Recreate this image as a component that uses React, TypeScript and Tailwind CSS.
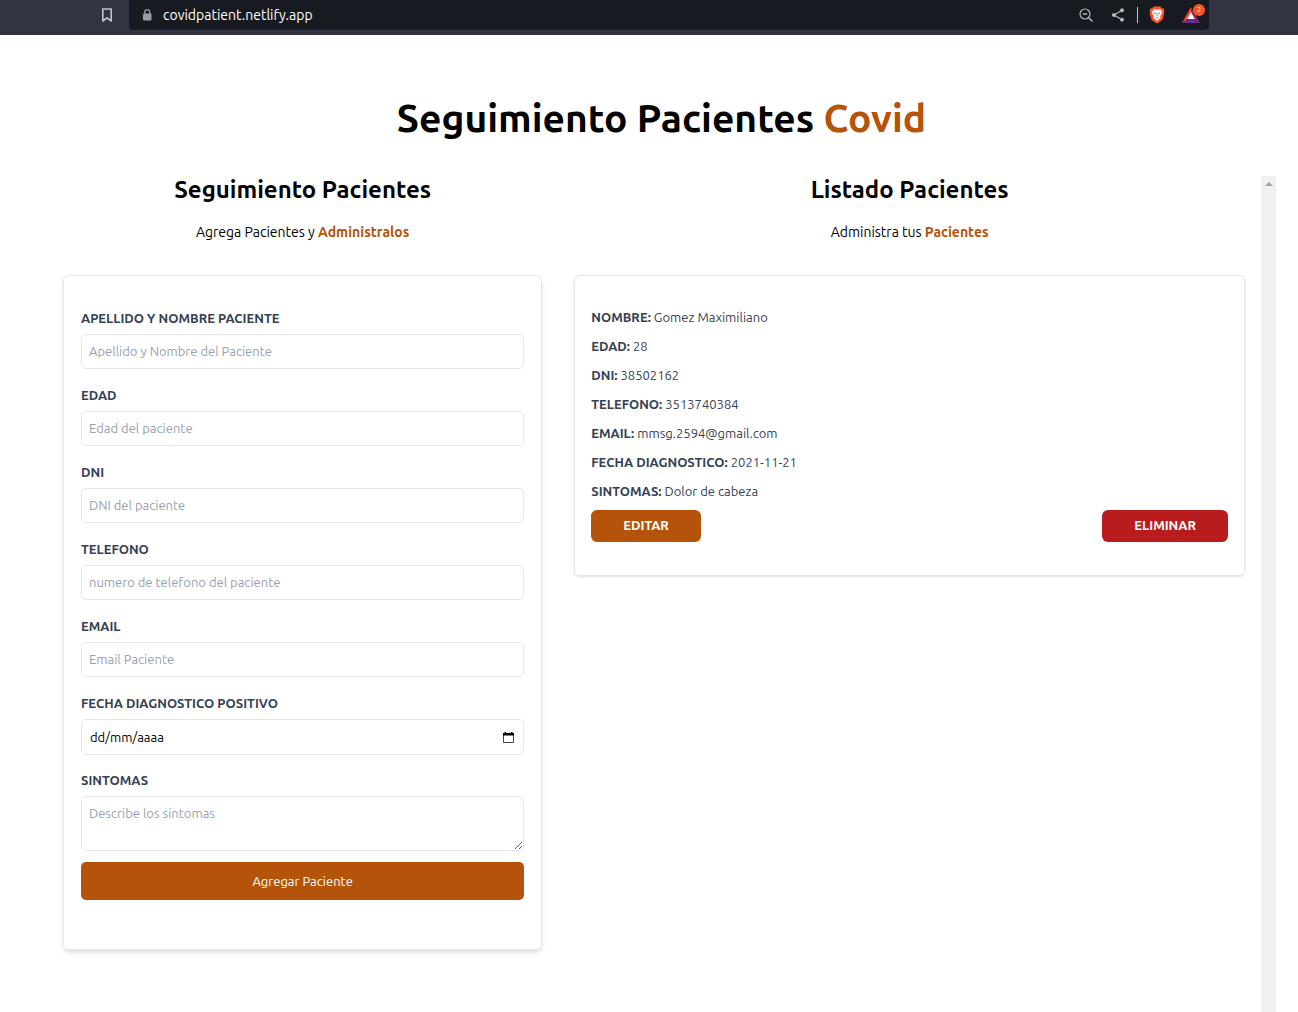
import { MdShare } from 'react-icons/md';

const label = 'text-[13px] leading-5 font-bold text-gray-700 uppercase';
const field =
  'mt-1.5 block w-full rounded-[5px] border border-gray-200 px-[7px] text-[13px] leading-5 placeholder:text-gray-400';

const fields = [
  { id: 'nombre', label: 'Apellido y nombre paciente', placeholder: 'Apellido y Nombre del Paciente', type: 'text' },
  { id: 'edad', label: 'Edad', placeholder: 'Edad del paciente', type: 'number' },
  { id: 'dni', label: 'DNI', placeholder: 'DNI del paciente', type: 'number' },
  { id: 'telefono', label: 'Telefono', placeholder: 'numero de telefono del paciente', type: 'tel' },
  { id: 'email', label: 'Email', placeholder: 'Email Paciente', type: 'email' },
];

const patient = [
  ['Nombre', 'Gomez Maximiliano'],
  ['Edad', '28'],
  ['DNI', '38502162'],
  ['Telefono', '3513740384'],
  ['Email', 'mmsg.2594@gmail.com'],
  ['Fecha Diagnostico', '2021-11-21'],
  ['Sintomas', 'Dolor de cabeza'],
];

function BookmarkIcon() {
  return (
    <svg viewBox="0 0 16 16" className="size-4" aria-hidden="true">
      <path
        d="M3.800 2h8.400v12L8 10.800 3.800 14z"
        fill="none"
        stroke="currentColor"
        strokeWidth="1.600"
        strokeLinejoin="round"
      />
    </svg>
  );
}

function LockIcon() {
  return (
    <svg viewBox="0 0 12 14" className="h-3.5 w-3" aria-hidden="true">
      <rect x="2" y="5.500" width="8.500" height="7" rx="0.8" fill="currentColor" />
      <path d="M3.800 6V4a2.450 2.450 0 0 1 4.900 0v2" fill="none" stroke="currentColor" strokeWidth="1.300" />
    </svg>
  );
}

function ZoomOutIcon() {
  return (
    <svg viewBox="0 0 16 16" className="size-4" fill="none" stroke="currentColor" strokeWidth="1.200" aria-hidden="true">
      <circle cx="7" cy="7" r="5" />
      <path d="M4.800 7h4.400" strokeWidth="1.400" />
      <path d="M10.700 10.700L14.500 14.500" strokeWidth="1.500" />
    </svg>
  );
}

function BraveIcon() {
  return (
    <svg viewBox="0 0 18 20" className="h-[18px] w-4" aria-hidden="true">
      <path d="M5.500 0.500h7l2 2 1.500-.2L17.400 4.500 16.800 6.500 17.200 8 15 15.500 9 19.700 3 15.500.8 8l.4-1.500L.6 4.500 2 2.300l1.500.2z" fill="#fb542b" />
      <path d="M9 4l3.300-.5L14.800 6l-.4 2.200-1.900 3.200.6 1.700L9 16.700l-4.100-3.600.6-1.700-1.900-3.200L3.200 6l2.500-2.500z" fill="#fff" />
      <path d="M4.800 7l3 .8-.7 1.600zM13.200 7l-3 .8.7 1.600zM8.500 8h1v3.500h-1zM7 11.500l2 1.300 2-1.300-2 2.700z" fill="#fb542b" />
    </svg>
  );
}

function RewardsIcon() {
  return (
    <svg viewBox="0 0 18 16" className="h-4 w-[18px]" aria-hidden="true">
      <path d="M9 0L0 16l5.500-4L9 5.500z" fill="#ff4724" />
      <path d="M9 0l9 16-5.500-4L9 5.500z" fill="#9e1f63" />
      <path d="M0 16h18l-5.500-4h-7z" fill="#662d91" />
      <path d="M9 5L5.200 12h7.600z" fill="#fff" />
    </svg>
  );
}

function CalendarIcon() {
  return (
    <svg viewBox="0 0 13 13" className="size-[13px]" aria-hidden="true">
      <path d="M1.500 4v7.500h10V4" fill="none" stroke="#444" />
      <path d="M1 2h1.500V1H4v1h5V1h1.500v1H12v2.500H1z" fill="#000" />
    </svg>
  );
}

function BrowserBar() {
  return (
    <header className="flex h-[35px] items-start bg-[#323443] pr-[89px] pl-[99px] text-[#c3c4c7]">
      <button type="button" aria-label="Guardar marcador" className="mt-[7px]">
        <BookmarkIcon />
      </button>
      <div className="ml-3.5 flex h-[30px] flex-1 items-center rounded-b bg-[#171a21] pr-1 pl-3 text-[#b5b6b9]">
        <span className="text-[#9a9ba3]"><LockIcon /></span>
        <input
          aria-label="Dirección"
          defaultValue="covidpatient.netlify.app"
          className="ml-2.5 min-w-0 flex-1 bg-transparent text-sm text-white outline-none"
        />
        <button type="button" aria-label="Zoom"><ZoomOutIcon /></button>
        <button type="button" aria-label="Compartir" className="ml-4"><MdShare size={16} /></button>
        <span className="ml-[11px] h-4 w-px bg-[#c3c4c7]" />
        <button type="button" aria-label="Brave Shields" className="ml-[11px]"><BraveIcon /></button>
        <button type="button" aria-label="Brave Rewards" className="relative ml-[17px] pr-[5px]">
          <RewardsIcon />
          <span className="absolute -top-[3px] right-0 flex size-3 items-center justify-center rounded-full bg-[#fb542b] text-[8px] leading-none text-white">
            2
          </span>
        </button>
      </div>
    </header>
  );
}

function PatientForm() {
  return (
    <section className="w-[41.6%] px-4">
      <h2 className="text-center text-2xl leading-7 font-bold">Seguimiento Pacientes</h2>
      <p className="mt-[18px] text-center text-sm">
        Agrega Pacientes y <span className="font-bold text-[#b45309]">Administralos</span>
      </p>
      <form className="mt-[33px] rounded-md border border-gray-200 px-[17px] pt-8 pb-[49px] shadow-md">
        {fields.map((f) => (
          <div key={f.id} className="mb-4">
            <label htmlFor={f.id} className={`block ${label}`}>{f.label}</label>
            <input id={f.id} type={f.type} placeholder={f.placeholder} className={`h-[35px] pb-0.5 ${field}`} />
          </div>
        ))}
        <div className="mb-[15px]">
          <label htmlFor="fecha" className={`block ${label}`}>Fecha diagnostico positivo</label>
          <div className="mt-1.5 flex h-9 items-center rounded-[5px] border border-gray-200 px-2">
            <input
              id="fecha"
              type="text"
              placeholder="dd/mm/aaaa"
              className="min-w-0 flex-1 text-[13px] leading-5 outline-none placeholder:text-black"
            />
            <button type="button" aria-label="Abrir calendario"><CalendarIcon /></button>
          </div>
        </div>
        <label htmlFor="sintomas" className={`block ${label}`}>Sintomas</label>
        <textarea id="sintomas" placeholder="Describe los sintomas" className={`h-[55px] py-1.5 ${field}`} />
        <button type="submit" className="mt-[11px] block h-[38px] w-full rounded-[5px] bg-[#b45309] pt-0.5 text-[13px] text-white">
          Agregar Paciente
        </button>
      </form>
    </section>
  );
}

function PatientList() {
  return (
    <section className="flex-1 px-4">
      <h2 className="text-center text-2xl leading-7 font-bold">Listado Pacientes</h2>
      <p className="mt-[18px] text-center text-sm">
        Administra tus <span className="font-bold text-[#b45309]">Pacientes</span>
      </p>
      <article className="mt-[33px] rounded-md border border-gray-200 px-4 pt-[31px] pb-[33px] shadow">
        {patient.map(([name, value]) => (
          <p key={name} className="mb-[9px] text-[13px] leading-5 text-gray-700">
            <span className="font-bold uppercase">{name}:</span> {value}
          </p>
        ))}
        <div className="flex justify-between text-[13px] font-bold text-white">
          <button type="button" className="h-8 rounded-md bg-[#b45309] px-8 uppercase">Editar</button>
          <button type="button" className="h-8 rounded-md bg-[#b91c1c] px-8 uppercase">Eliminar</button>
        </div>
      </article>
    </section>
  );
}

export default function App() {
  return (
    <div className="flex min-h-screen flex-col bg-white font-['Ubuntu','Noto_Sans',sans-serif] text-black">
      <BrowserBar />
      <main className="flex flex-1 flex-col pr-[22px] pl-[47px]">
        <h1 className="mt-[59px] text-center text-[39px] leading-[48px] font-bold">
          Seguimiento Pacientes <span className="text-[#b45309]">Covid</span>
        </h1>
        <div className="mt-[34px] flex flex-1">
          <PatientForm />
          <PatientList />
          <div className="flex w-[15px] justify-center bg-[#f0f0f0] pt-1.5">
            <span className="size-0 border-x-4 border-b-4 border-x-transparent border-b-[#a3a3a3]" />
          </div>
        </div>
      </main>
    </div>
  );
}
